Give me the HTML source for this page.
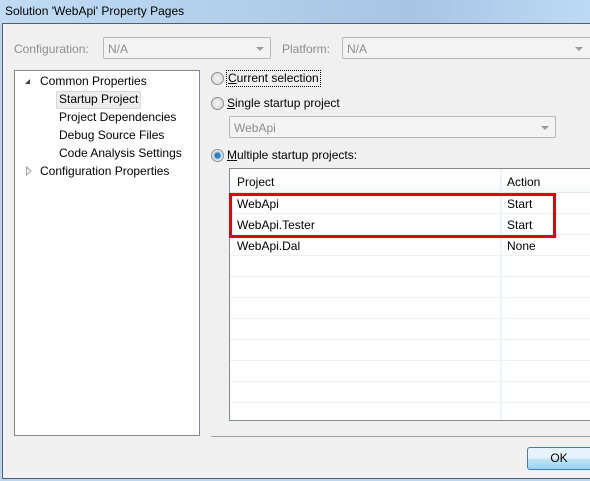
<!DOCTYPE html><html><head><style>
*{margin:0;padding:0;box-sizing:border-box}
body{width:590px;height:481px;overflow:hidden;background:#bcd6ef;font-family:"Liberation Sans",sans-serif;font-size:12px;color:#000;position:relative}
.a{position:absolute}
.title{left:0;top:0;width:590px;height:24px;background:linear-gradient(90deg,#c0dbf3,#aecbe8 50%,#a7c5e3 70%,#bcd9f5);}
.title span{position:absolute;left:5px;top:4px;font-size:12px}
.body{left:2px;top:23px;width:600px;height:456px;background:#f0f0f0;border:1px solid #555e6a;border-right:none}
.combo{background:#f3f3f3;border:1px solid #b8b8b8;border-radius:2px;color:#8c8c8c;padding:4px 0 0 4px;height:22px}
.arr{position:absolute;right:6px;top:9px;border-left:4px solid transparent;border-right:4px solid transparent;border-top:4px solid #9a9a9a}
.dis{color:#8d8d8d}
.radio{width:13px;height:13px;border-radius:50%;border:1px solid #8e8f8f;background:radial-gradient(#f4f4f4,#d4d4d4)}
.tree{left:14px;top:70px;width:186px;height:366px;background:#fff;border:1px solid #828790}
.grid{left:229px;top:168px;width:370px;height:253px;background:#fff;border:1px solid #828790}
.row{position:absolute;left:0;width:370px;height:21px;border-bottom:1px solid #f0f0f0}
.row span{position:absolute;top:4px}
</style></head><body>
<div class="a title"><span>Solution 'WebApi' Property Pages</span></div>
<div class="a body"></div>
<div class="a dis" style="left:14px;top:42px">Configuration:</div>
<div class="a combo" style="left:103px;top:37px;width:168px">N/A<div class="arr"></div></div>
<div class="a dis" style="left:282px;top:42px">Platform:</div>
<div class="a combo" style="left:342px;top:37px;width:260px">N/A<div class="arr" style="right:18px"></div></div>
<div class="a tree">
<div class="a" style="left:10px;top:8px;border-left:5px solid transparent;border-bottom:5px solid #404040;"></div>
<div class="a" style="left:25px;top:3px">Common Properties</div>
<div class="a" style="left:41px;top:20px;width:85px;height:18px;background:#ededed;border:1px solid #d8d8d8;border-radius:2px"></div>
<div class="a" style="left:44px;top:21px">Startup Project</div>
<div class="a" style="left:44px;top:39px">Project Dependencies</div>
<div class="a" style="left:44px;top:57px">Debug Source Files</div>
<div class="a" style="left:44px;top:75px">Code Analysis Settings</div>
<svg class="a" style="left:10px;top:95px" width="8" height="10"><path d="M1.5 1 L6 5 L1.5 9 Z" fill="none" stroke="#a0a0a0"/></svg>
<div class="a" style="left:25px;top:93px">Configuration Properties</div>
</div>
<div class="a radio" style="left:211px;top:72px"></div>
<div class="a" style="left:226px;top:70px;border:1px dotted #000;padding:0 1px;height:17px;line-height:15px"><u>C</u>urrent selection</div>
<div class="a radio" style="left:211px;top:97px"></div>
<div class="a" style="left:227px;top:96px"><u>S</u>ingle startup project</div>
<div class="a combo" style="left:229px;top:116px;width:327px">WebApi<div class="arr"></div></div>
<div class="a radio" style="left:211px;top:149px;background:radial-gradient(#2a7fc9 0 2.5px,#9fc6e8 3.5px,#e8e8e8 4.5px)"></div>
<div class="a" style="left:227px;top:148px"><u>M</u>ultiple startup projects:</div>
<div class="a grid">
<div class="row" style="top:0;height:24px;background:linear-gradient(#fff 50%,#f6f7f8);border-bottom:1px solid #e6e6e6"><span style="left:7px;top:6px">Project</span><span style="left:277px;top:6px">Action</span></div>
<div class="row" style="top:24px"><span style="left:7px">WebApi</span><span style="left:277px">Start</span></div>
<div class="row" style="top:45px"><span style="left:7px">WebApi.Tester</span><span style="left:277px">Start</span></div>
<div class="row" style="top:66px"><span style="left:7px">WebApi.Dal</span><span style="left:277px">None</span></div>
<div class="row" style="top:87px"></div><div class="row" style="top:108px"></div><div class="row" style="top:129px"></div><div class="row" style="top:150px"></div><div class="row" style="top:171px"></div><div class="row" style="top:192px"></div><div class="row" style="top:213px"></div>
<div class="a" style="left:270px;top:0;width:2px;height:251px;background:#edf2f8"></div>
</div>
<div class="a" style="left:229px;top:193px;width:327px;height:45px;border:3px solid #e8000b"></div>
<div class="a" style="left:211px;top:436px;width:390px;height:1px;background:#a0a0a0"></div>
<div class="a" style="left:527px;top:447px;width:70px;height:23px;border:1px solid #3c7fb1;border-radius:3px;background:linear-gradient(#e5f4fc 50%,#c4e5f6 51%,#98d1ef);text-align:center;line-height:21px;padding-right:6px">OK</div>
</body></html>
